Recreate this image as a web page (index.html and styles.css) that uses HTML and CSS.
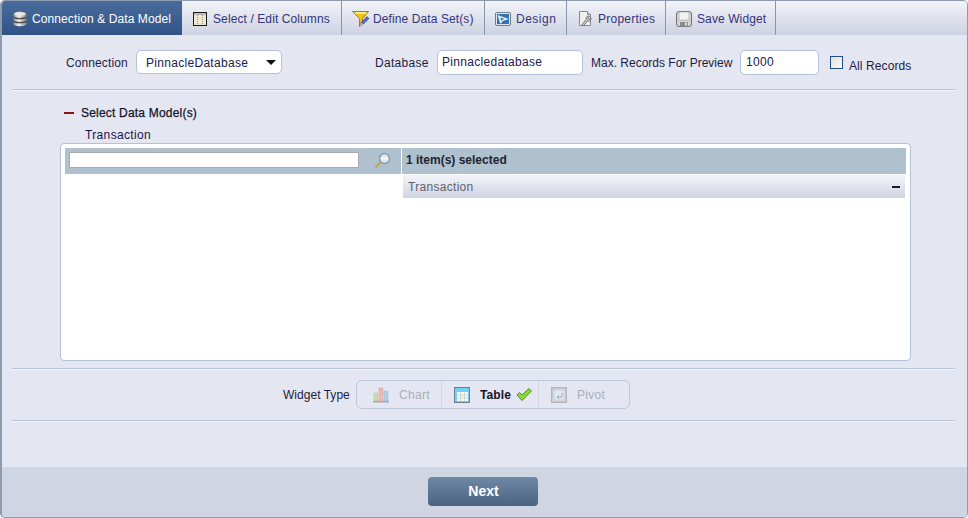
FILE: index.html
```html
<!DOCTYPE html>
<html lang="en">
<head>
<meta charset="utf-8">
<title>Connection &amp; Data Model</title>
<link rel="stylesheet" href="styles.css">
</head>
<body>
<div class="frame">
  <nav class="tabs">
    <a class="tab tab-active tab-1">
      <svg class="icon" viewBox="0 0 16 16"><defs><linearGradient id="db" x1="0" x2="1" y1="0" y2="0"><stop offset="0" stop-color="#8d8d8d"/><stop offset=".4" stop-color="#f4f4f4"/><stop offset="1" stop-color="#808080"/></linearGradient></defs><path d="M1.500 3c0-3 13-3 13 0v10c0 3-13 3-13 0z" fill="url(#db)"/><path d="M1.500 6c2 2.200 11 2.200 13 0M1.500 10c2 2.200 11 2.200 13 0" fill="none" stroke="#4a4a4a" stroke-width="1.200"/><ellipse cx="8" cy="3" rx="5.500" ry="1.700" fill="#e8e8e8"/></svg>
      <span>Connection &amp; Data Model</span>
    </a>
    <a class="tab tab-2">
      <svg class="icon" viewBox="0 0 16 16"><rect x=".5" y="1.500" width="13" height="13" fill="#efe9d2" stroke="#1a1a1a"/><rect x="1" y="2" width="12" height="2" fill="#b9b9b0"/><path d="M4.500 4v10M9.500 4v10" stroke="#e8920f" stroke-width="1.300" stroke-dasharray="1 1" fill="none"/></svg>
      <span>Select / Edit Columns</span>
    </a>
    <a class="tab tab-3">
      <svg class="icon icon-wide" viewBox="0 0 18 18"><path d="M.5 1.500h16l-6 7v5l-3 3v-8z" fill="#f5c20c" stroke="#a87a10"/><path d="M2 2h13l-1.500 2h-10z" fill="#fbe98a"/><path d="M8 16l1-3.500 6-6 2 2-6 6z" fill="#3c74d0" stroke="#7a3030" stroke-width=".6"/><path d="M8 16l1-3.500 2 2z" fill="#f2d0a0"/></svg>
      <span>Define Data Set(s)</span>
    </a>
    <a class="tab tab-4">
      <svg class="icon" viewBox="0 0 16 16"><rect x=".5" y="1.500" width="15" height="13" rx="1.500" fill="#dfe6ee" stroke="#6d7b8a"/><rect x="2" y="3" width="12" height="10" fill="#2f74b0"/><path d="M3 4.500l10 3.500-5 1.500-2.500 3z" fill="#e6f1fa" stroke="#fff" stroke-width=".5"/><path d="M5.500 6.500l4 1.500-2.400.7-1 1.400z" fill="#2f74b0"/></svg>
      <span>Design</span>
    </a>
    <a class="tab tab-5">
      <svg class="icon" viewBox="0 0 16 16"><path d="M1.500.5h8l3 3v11h-11z" fill="#f0f0ee" stroke="#8a8a8a"/><path d="M9.500.5v3h3" fill="#ddd" stroke="#8a8a8a"/><path d="M4 13.500l4.500-5.500c-1-2 1-3.500 3-2.800L10 7l1 1.300 2-1.500c.5 2.200-1 4-3.300 3l-4 5z" fill="#c4c4c4" stroke="#555" stroke-width=".7"/></svg>
      <span>Properties</span>
    </a>
    <a class="tab tab-6">
      <svg class="icon" viewBox="0 0 16 16"><rect x=".5" y=".5" width="15" height="15" rx="2.500" fill="#d6d6d6" stroke="#6f6f6f"/><rect x="3" y="1" width="10" height="8" fill="#f2f2f2" stroke="#a5a5a5" stroke-width=".6"/><rect x="4" y="11" width="8" height="4.500" fill="#8b8b8b"/><rect x="9" y="11.500" width="2" height="3" fill="#e0e0e0"/></svg>
      <span>Save Widget</span>
    </a>
    <div class="tab-fill"></div>
  </nav>

  <main class="content">
    <div class="settings">
      <label class="lbl lbl-conn">Connection</label>
      <div class="select"><span>PinnacleDatabase</span><i class="caret"></i></div>
      <label class="lbl lbl-db">Database</label>
      <div class="field field-db">Pinnacledatabase</div>
      <label class="lbl lbl-max">Max. Records For Preview</label>
      <div class="field field-max">1000</div>
      <div class="check"></div>
      <label class="lbl lbl-all">All Records</label>
    </div>
    <div class="rule rule-top"></div>

    <div class="section-head"><i class="dash"></i><strong>Select Data Model(s)</strong></div>
    <div class="selected-name">Transaction</div>

    <div class="panel">
      <div class="panel-left">
        <div class="search-bar">
          <div class="search-input"></div>
          <svg class="search-icon" viewBox="0 0 17 17"><circle cx="10.500" cy="6.500" r="5" fill="#dfe8ef" stroke="#7f9ab0" stroke-width="1.300"/><path d="M7 6.500h7" stroke="#fff" stroke-width="1.500"/><path d="M6.500 10.500L1.500 15.500" stroke="#c9a43a" stroke-width="2.200"/></svg>
        </div>
      </div>
      <div class="panel-right">
        <div class="selected-count">1 item(s) selected</div>
        <div class="selected-row"><span>Transaction</span><i class="minus"></i></div>
      </div>
    </div>

    <div class="rule rule-mid"></div>

    <div class="widget-row">
      <label class="lbl lbl-widget">Widget Type</label>
      <div class="segments">
        <div class="seg seg-chart">
          <svg class="icon" viewBox="0 0 16 16"><rect x="1" y="6" width="4" height="8" fill="#c9d9a8" stroke="#b3c490" stroke-width=".5"/><rect x="6" y="1" width="4" height="13" fill="#edb9b5" stroke="#d9a5a0" stroke-width=".5"/><rect x="11" y="4" width="4" height="10" fill="#a9d2ec" stroke="#93bdd8" stroke-width=".5"/><rect y="14" width="16" height="1.500" fill="#aaa"/></svg>
          <span>Chart</span>
        </div>
        <div class="seg seg-table">
          <svg class="icon" viewBox="0 0 16 16"><rect x=".5" y=".5" width="15" height="15" fill="#74cdf4" stroke="#6d7f8c"/><rect x="3" y="5" width="11" height="9" fill="#f6f9ec"/><path d="M3 8h11M3 11h11M6.500 5v9M10.500 5v9" stroke="#b9d0c8" stroke-width=".7"/></svg>
          <strong>Table</strong>
          <svg class="tick" viewBox="0 0 16 14"><path d="M1 7l2.500-2.500L6 7l7-6.500L15.500 3 6 12.500z" fill="#8ed63c" stroke="#3d8a14" stroke-width=".9"/></svg>
        </div>
        <div class="seg seg-pivot">
          <svg class="icon" viewBox="0 0 16 16"><rect x=".75" y=".75" width="14.500" height="14.500" fill="#d9dde6" stroke="#b0b4bc" stroke-width="1.500"/><rect x="3" y="3" width="10" height="10" fill="#e0e7f2" stroke="#c2c8d2" stroke-width=".7"/><path d="M11 6v4H6M6 10l2-1.500M6 10l2 1.500" fill="none" stroke="#a3aec0"/></svg>
          <span>Pivot</span>
        </div>
      </div>
    </div>
    <div class="rule rule-bottom"></div>
  </main>

  <footer class="footer">
    <button class="next" type="button">Next</button>
  </footer>
</div>
</body>
</html>
```

FILE: styles.css
```css
* { box-sizing: border-box; }

html, body {
  margin: 0;
  padding: 0;
  width: 968px;
  height: 518px;
  overflow: hidden;
  background: #fff;
}

body {
  font-family: "Liberation Sans", Arial, sans-serif;
  font-size: 12px;
  letter-spacing: .3px;
  color: #1c1c3c;
}

.frame {
  width: 968px;
  height: 518px;
  border: 1px solid #8c9bb0;
  border-left-width: 2px;
  border-radius: 5px;
  display: flex;
  flex-direction: column;
  overflow: hidden;
  background: #e4e7f1;
}

/* tabs */
.tabs {
  display: flex;
  height: 34px;
  flex: none;
  background: linear-gradient(#f3f4f9, #cdd2e2);
}

.tab {
  display: flex;
  align-items: center;
  height: 34px;
  border-right: 1px solid #8497ae;
  color: #34347a;
  white-space: nowrap;
  padding-top: 2px;
  letter-spacing: .1px;
}

.tab .icon { margin-right: 4px; flex: none; }
.tab .icon-wide { width: 18px; height: 18px; margin-right: 3px; }

.tab-active {
  background: linear-gradient(#4a6c9b, #2f5389);
  color: #fff;
  border-right: 0;
}

.tab-1 { width: 180px; padding-left: 10px; }
.tab-2 { width: 160px; padding-left: 11px; }
.tab-3 { width: 143px; padding-left: 10px; }
.tab-4 { width: 82px; padding-left: 10px; letter-spacing: .5px; }
.tab-4 .icon { margin-right: 5px; }
.tab-5 { width: 99px; padding-left: 11px; letter-spacing: .25px; }
.tab-6 { width: 110px; padding-left: 10px; letter-spacing: .1px; }
.tab-6 .icon { margin-right: 5px; }
.tab-fill { flex: 1; }

.icon { width: 16px; height: 16px; display: block; }

/* main */
.content {
  flex: 1;
  background: #e4e7f1;
  display: flex;
  flex-direction: column;
}

.settings {
  display: flex;
  align-items: center;
  height: 26px;
  margin-top: 14px;
}

.lbl { color: #1c1c44; white-space: nowrap; padding-top: 2px; }
.lbl-conn { margin-left: 64px; width: 70px; letter-spacing: .1px; }
.lbl-db { margin-left: 93px; width: 62px; }
.lbl-max { margin-left: 8px; width: 149px; letter-spacing: 0; }
.lbl-all { margin-top: 5px; letter-spacing: .1px; }

.select, .field {
  background: #fff;
  border: 1px solid #b3c2d6;
  border-radius: 5px;
  height: 25px;
  line-height: 23px;
  color: #20204a;
}

.select {
  width: 146px;
  height: 24px;
  padding-left: 9px;
  display: flex;
  align-items: center;
  justify-content: space-between;
  padding-right: 5px;
}

.select span { padding-top: 2px; }

.caret {
  width: 0;
  height: 0;
  border-left: 5px solid transparent;
  border-right: 5px solid transparent;
  border-top: 5px solid #111;
}

.field { padding-left: 4px; }
.field-db { width: 146px; }
.field-max { width: 79px; padding-left: 5px; }

.check {
  width: 13px;
  height: 13px;
  margin: 1px 6px 0 11px;
  border: 1px solid #1f4f86;
  background: linear-gradient(135deg, #e2e2dc, #fafaf7);
}

.rule {
  height: 2px;
  margin: 0 12px 0 10px;
  background: linear-gradient(#b9c3d4 50%, #f4f5fa 50%);
  flex: none;
}
.rule-top { margin-top: 14px; }
.rule-mid { margin-top: 7px; }
.rule-bottom { margin-top: 11px; }

.section-head {
  display: flex;
  align-items: center;
  height: 14px;
  margin: 15px 0 0 62px;
  color: #14142a;
}
.section-head strong { font-weight: normal; -webkit-text-stroke: .25px #14142a; letter-spacing: .2px; }

.dash {
  width: 10px;
  height: 2px;
  background: #8c1010;
  margin-right: 7px;
}

.selected-name {
  margin: 8px 0 0 83px;
  height: 14px;
  line-height: 14px;
  color: #1c1450;
  letter-spacing: .35px;
}

.panel {
  width: 851px;
  height: 218px;
  margin: 1px 0 0 58px;
  background: #fff;
  border: 1px solid #b3c2d6;
  border-radius: 4px;
  padding: 4px;
  display: flex;
  gap: 1px;
}

.panel-left { width: 336px; flex: none; }

.search-bar {
  background: #afc0cf;
  height: 26px;
  display: flex;
  align-items: flex-start;
  padding: 4px 0 0 4px;
}

.search-input {
  width: 290px;
  height: 16px;
  background: #fff;
  border: 1px solid #a9a9a9;
}

.search-icon {
  width: 17px;
  height: 17px;
  margin-left: 15px;
}

.panel-right { flex: 1; }

.selected-count {
  background: #afc0cf;
  height: 26px;
  line-height: 24px;
  padding-left: 4px;
  font-weight: bold;
  letter-spacing: 0;
  color: #1e2430;
}

.selected-row {
  margin: 1px 1px 0;
  height: 23px;
  background: linear-gradient(#f3f4f9, #cfd4e3);
  display: flex;
  align-items: center;
  justify-content: space-between;
  padding: 0 5px 0 5px;
  color: #62626e;
}

.minus {
  width: 8px;
  height: 2px;
  background: #1a1a1a;
}

.widget-row {
  display: flex;
  align-items: center;
  height: 29px;
  margin-top: 10px;
}

.lbl-widget { margin-left: 281px; width: 73px; letter-spacing: .03px; padding-top: 0; }

.segments {
  width: 274px;
  height: 29px;
  border: 1px solid #bcc6d8;
  border-radius: 6px;
  display: flex;
}

.seg {
  display: flex;
  align-items: center;
  border-right: 1px solid #d0d6e4;
  color: #a9aebb;
}
.seg:last-child { border-right: 0; }

.seg-chart { width: 85px; padding-left: 16px; gap: 10px; }
.seg-table { width: 97px; padding-left: 12px; gap: 10px; }
.seg-pivot { flex: 1; padding-left: 12px; gap: 10px; }

.seg-table strong {
  color: #14142a;
  letter-spacing: .1px;
}

.tick {
  width: 16px;
  height: 14px;
  margin-left: -5px;
}

/* footer */
.footer {
  height: 50px;
  flex: none;
  background: #d0d5e4;
  display: flex;
  justify-content: center;
  padding-top: 10px;
  padding-right: 4px;
}

.next {
  width: 110px;
  height: 29px;
  border: 0;
  border-radius: 4px;
  background: linear-gradient(#6f88a4, #4a6382);
  color: #fff;
  font-family: "Liberation Sans", Arial, sans-serif;
  font-size: 14px;
  font-weight: bold;
  letter-spacing: 0;
  padding: 0 0 1px 2px;
}
```
